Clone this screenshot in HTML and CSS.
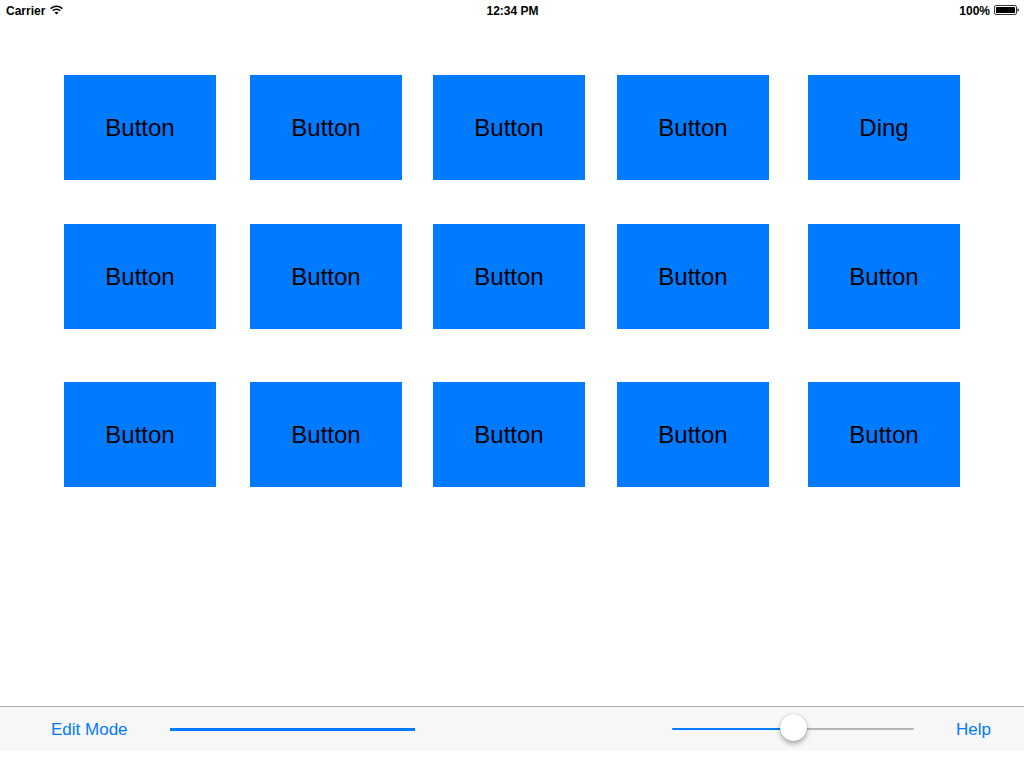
FILE: index.html
```html
<!DOCTYPE html>
<html lang="en">
<head>
<meta charset="utf-8">
<meta name="viewport" content="width=device-width, initial-scale=1">
<title>Button Board</title>
<link rel="stylesheet" href="styles.css">
</head>
<body>
<header class="status-bar">
  <div class="carrier">
    <span>Carrier</span>
    <svg class="wifi" viewBox="0 0 13 10" width="13" height="10" aria-hidden="true">
      <path d="M.6 3.6q5.9-4.6 11.8 0" fill="none" stroke="#000" stroke-width="1.5"/>
      <path d="M2.7 5.7q3.8-2.9 7.6 0" fill="none" stroke="#000" stroke-width="1.5"/>
      <path d="M4.5 7.4q2-1.4 4 0L6.5 9.5z"/>
    </svg>
  </div>
  <time class="clock">12:34 PM</time>
  <div class="power">
    <span>100%</span>
    <svg class="battery" viewBox="0 0 25 10" width="25" height="10" aria-hidden="true">
      <rect x=".5" y=".5" width="22" height="9" rx="1.6" fill="none" stroke="#000" stroke-width=".8"/>
      <rect x="2" y="2" width="19" height="6" rx=".6"/>
      <path d="M23.5 3.2q1.3.5 1.3 1.8t-1.3 1.8z"/>
    </svg>
  </div>
</header>
<main class="board">
  <div class="board-row">
    <button class="tile">Button</button>
    <button class="tile">Button</button>
    <button class="tile">Button</button>
    <button class="tile">Button</button>
    <button class="tile">Ding</button>
  </div>
  <div class="board-row">
    <button class="tile">Button</button>
    <button class="tile">Button</button>
    <button class="tile">Button</button>
    <button class="tile">Button</button>
    <button class="tile">Button</button>
  </div>
  <div class="board-row board-row-last">
    <button class="tile">Button</button>
    <button class="tile">Button</button>
    <button class="tile">Button</button>
    <button class="tile">Button</button>
    <button class="tile">Button</button>
  </div>
</main>
<footer class="toolbar">
  <button class="bar-button">Edit Mode</button>
  <progress class="playback" value="1" max="1" aria-label="Playback progress"></progress>
  <input class="volume" type="range" min="0" max="100" value="50" aria-label="Volume">
  <button class="bar-button">Help</button>
</footer>
</body>
</html>
```
FILE: styles.css
```css
* {
  box-sizing: border-box;
}

body {
  display: flex;
  flex-direction: column;
  min-height: 100vh;
  margin: 0;
  padding-bottom: 17px;
  background: #fff;
  color: #000;
  font-family: "Liberation Sans", Arial, sans-serif;
}

button {
  padding: 0;
  border: 0;
  font-family: inherit;
}

.status-bar {
  display: grid;
  grid-template-columns: 1fr auto 1fr;
  align-items: center;
  height: 20px;
  padding: 0 5px 0 6px;
  font-size: 12px;
  font-weight: bold;
  line-height: 18px;
}

.status-bar span,
.clock {
  padding-top: 2px;
}

.carrier,
.power {
  display: flex;
  align-items: center;
  gap: 5px;
}

.power {
  justify-content: flex-end;
  gap: 4px;
}

.board {
  flex: 1;
  padding: 55px 64px;
}

.board-row {
  display: grid;
  grid-template-columns: 186fr 183fr 184fr 191fr 152px;
  margin-bottom: 44px;
}

.board-row-last {
  margin-top: 53px;
  margin-bottom: 0;
}

.tile {
  width: 152px;
  height: 105px;
  background: #007aff;
  color: #000;
  font-size: 24px;
}

.toolbar {
  display: flex;
  align-items: center;
  height: 45px;
  padding: 0 33px 0 51px;
  border-top: 1px solid #b2b2b2;
  background: #f7f7f7;
}

.bar-button {
  padding-top: 2px;
  background: none;
  color: #007aff;
  font-size: 17px;
  line-height: 42px;
}

.playback {
  appearance: none;
  width: 245px;
  height: 3px;
  margin-left: 42px;
  border: 0;
}

.playback::-webkit-progress-bar {
  background: #b7b7b7;
}

.playback::-webkit-progress-value {
  background: #007aff;
}

.volume {
  appearance: none;
  width: 242px;
  height: 28px;
  margin: 0 42px 0 auto;
  background: none;
}

.volume::-webkit-slider-runnable-track {
  height: 2px;
  border-radius: 1px;
  background: linear-gradient(to right, #007aff 50%, #b7b7b7 50%);
}

.volume::-webkit-slider-thumb {
  appearance: none;
  width: 27px;
  height: 27px;
  margin-top: -14px;
  border-radius: 50%;
  background: #fff;
  box-shadow: 0 0 1px rgba(0, 0, 0, 0.4), 0 3px 5px rgba(0, 0, 0, 0.3);
}
```
